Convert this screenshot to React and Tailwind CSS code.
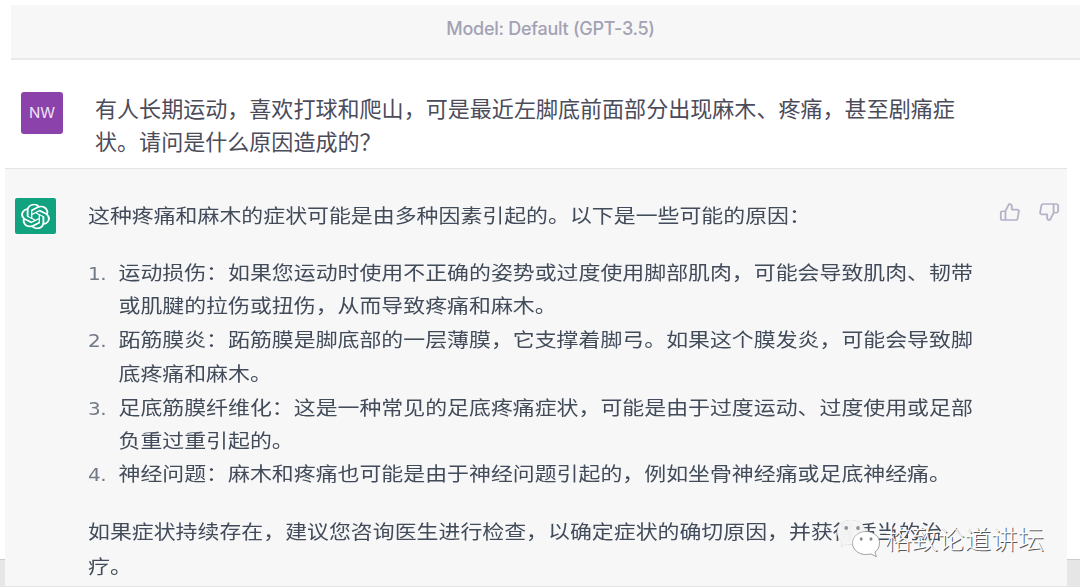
import { FiThumbsDown, FiThumbsUp } from "react-icons/fi";
import { SiOpenai } from "react-icons/si";

const question = [
  "有人长期运动，喜欢打球和爬山，可是最近左脚底前面部分出现麻木、疼痛，甚至剧痛症",
  "状。请问是什么原因造成的？",
];

const causes = [
  [
    "运动损伤：如果您运动时使用不正确的姿势或过度使用脚部肌肉，可能会导致肌肉、韧带",
    "或肌腱的拉伤或扭伤，从而导致疼痛和麻木。",
  ],
  [
    "跖筋膜炎：跖筋膜是脚底部的一层薄膜，它支撑着脚弓。如果这个膜发炎，可能会导致脚",
    "底疼痛和麻木。",
  ],
  [
    "足底筋膜纤维化：这是一种常见的足底疼痛症状，可能是由于过度运动、过度使用或足部",
    "负重过重引起的。",
  ],
  ["神经问题：麻木和疼痛也可能是由于神经问题引起的，例如坐骨神经痛或足底神经痛。"],
];

const closing = [
  "如果症状持续存在，建议您咨询医生进行检查，以确定症状的确切原因，并获得适当的治",
  "疗。",
];

function Lines({ lines }) {
  return lines.map((line) => (
    <span key={line} className="block whitespace-nowrap">
      {line}
    </span>
  ));
}

function WechatMark() {
  return (
    <svg
      viewBox="0 0 46 40"
      className="h-10 w-[46px] drop-shadow-[0.5px_0.5px_0.3px_rgba(90,90,90,0.6)]"
    >
      <path
        fill="#fcfcfc"
        fillOpacity="0.93"
        d="M15 1C7 1 1 6.200 1 13c0 4 2 7.300 5 9.500L5 28l6-3c1.300.4 2.700.6 4 .6 8 0 14.500-5.500 14.500-12.500S23 1 15 1z"
      />
      <ellipse cx="10.200" cy="9" rx="1.800" ry="2" fill="#8d9197" />
      <ellipse cx="22" cy="9" rx="1.800" ry="2" fill="#8d9197" />
      <path
        fill="#fff"
        stroke="#999"
        strokeWidth="0.7"
        d="M30 12.500c-7.500 0-13.500 5-13.500 11.500S22.500 35.500 30 35.500c1.700 0 3.300-.3 4.800-.7l5.400 2.700-1.300-4.400c2.900-2.100 4.600-5.400 4.600-9.100 0-6.500-6-11.500-13.500-11.500z"
      />
      <ellipse cx="25.200" cy="20" rx="1.500" ry="1.700" fill="#8a8a8a" />
      <ellipse cx="35" cy="20" rx="1.500" ry="1.700" fill="#8a8a8a" />
    </svg>
  );
}

export default function App() {
  return (
    <div className="relative flex h-[587px] w-[1080px] flex-col overflow-hidden bg-white pt-[5px] font-['Inter','Noto_Sans_CJK_SC',sans-serif]">
      <header className="ml-[11px] flex h-[55px] shrink-0 justify-center border-b-2 border-[#e9e9e9] bg-[#f7f7f7] pt-[10px] pl-[10px]">
        <span className="text-[18px] leading-7 font-medium tracking-[-0.27px] whitespace-nowrap text-[#a2a2b4]">
          Model: Default (GPT-3.5)
        </span>
      </header>

      <section className="flex h-[108px] shrink-0 pt-8 pl-[21px]">
        <div className="flex size-[42px] shrink-0 items-center justify-center rounded-[3px] bg-[#8c42ab] text-[15px] text-[#f1e4f6]">
          NW
        </div>
        <p className="mt-px ml-8 text-[22.05px] leading-[33px] text-[#4b4b5a]">
          <Lines lines={question} />
        </p>
      </section>

      <div className="flex min-h-0 flex-1">
        <div className="flex w-[5px] flex-col justify-end">
          <div className="h-[28px] border-t border-[#cccccc] bg-[#e6e6e6]" />
        </div>

        <section className="flex w-[1062px] border-y border-[#e4e4e4] bg-[#f7f7f7] pl-[10px]">
          <div className="mt-[29px] flex h-9 w-[41px] shrink-0 items-center justify-center rounded-[2px] bg-[#11a37f] text-white">
            <SiOpenai className="size-[29px] scale-y-[0.88]" />
          </div>

          <div className="mt-[30px] ml-8 w-[891px] origin-top scale-y-[0.873] text-[21.92px] leading-[38.4px] text-[#414b5a]">
            <p className="whitespace-nowrap">
              这种疼痛和麻木的症状可能是由多种因素引起的。以下是一些可能的原因：
            </p>
            <ol className="my-[27.5px]">
              {causes.map((cause, i) => (
                <li key={i} className="flex">
                  <span className="w-[30.5px] shrink-0 pt-px font-['DejaVu_Sans',sans-serif] text-[20px] tracking-[-0.5px] text-[#727a87]">
                    {i + 1}.
                  </span>
                  <div>
                    <Lines lines={cause} />
                  </div>
                </li>
              ))}
            </ol>
            <p>
              <Lines lines={closing} />
            </p>
          </div>

          <div className="mt-8 ml-5 flex h-5 shrink-0 gap-[17px] text-[#b5b3c8]">
            <FiThumbsUp className="size-[22px] scale-y-[0.88]" />
            <FiThumbsDown className="size-[22px] scale-y-[0.88]" />
          </div>
        </section>

        <div className="flex flex-1 flex-col justify-end">
          <div className="h-[28px] border-t border-[#cccccc] bg-[#e6e6e6]" />
        </div>
      </div>

      <div className="absolute top-[519px] left-[836px] flex items-center">
        <WechatMark />
        <span className="ml-[3px] text-[26.5px] leading-10 font-light whitespace-nowrap text-white [text-shadow:1px_1px_0.5px_#555]">
          格致论道讲坛
        </span>
      </div>
    </div>
  );
}
